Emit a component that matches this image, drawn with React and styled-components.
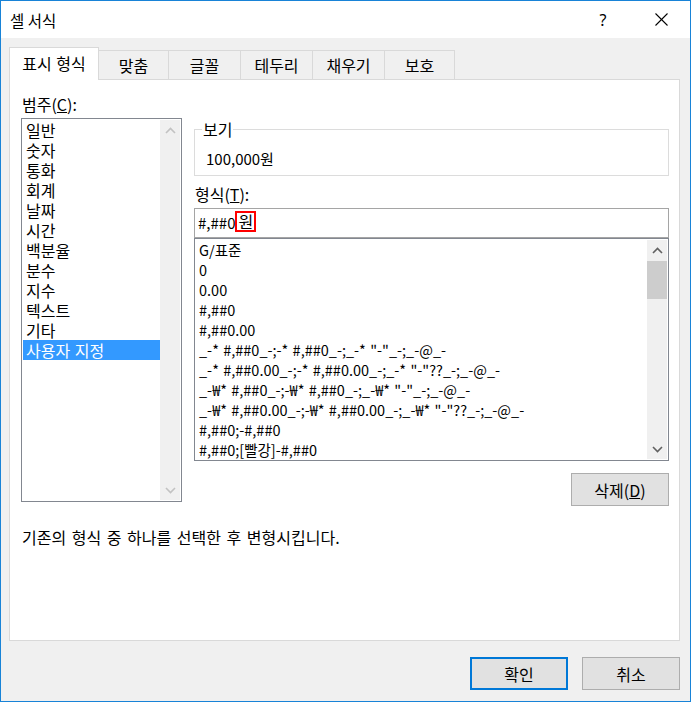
import React from "react";
import styled, { createGlobalStyle } from "styled-components";

const Global = createGlobalStyle`
  html, body { margin: 0; padding: 0; background: #ffffff; }
  body { font-family: "Noto Sans CJK KR", "Noto Sans", sans-serif; font-size: 16px; color: #000; }
  * { box-sizing: border-box; }
`;

const FONT = `"Noto Sans CJK KR", "Noto Sans", sans-serif`;

const Window = styled.div`
  width: 691px;
  height: 702px;
  border: 1px solid #1883d7;
  background: #f0f0f0;
  display: flex;
  flex-direction: column;
  font-family: ${FONT};
  font-size: 16px;
`;

const TitleBar = styled.div`
  height: 37px;
  background: #ffffff;
  display: flex;
  align-items: center;
  justify-content: space-between;
  padding-left: 9px;
  flex-shrink: 0;
`;

const Title = styled.div`
  font-size: 15.5px;
  line-height: 20px;
`;

const Controls = styled.div`
  display: flex;
  height: 100%;
`;

const CtrlBtn = styled.div`
  width: 58px;
  height: 100%;
  display: flex;
  align-items: center;
  justify-content: center;
  font-family: "Noto Sans", sans-serif;
  font-size: 16px;
  color: #000;
`;

const Body = styled.div`
  flex: 1;
  display: flex;
  flex-direction: column;
  padding: 10px 10px 0 8px;
  min-height: 0;
`;

const TabStrip = styled.div`
  display: flex;
  align-items: flex-end;
  height: 32px;
  margin-bottom: -1px;
  position: relative;
  z-index: 1;
`;

const Tab = styled.div`
  width: ${(p) => p.$w}px;
  height: ${(p) => (p.$active ? 33 : 30)}px;
  background: ${(p) => (p.$active ? "#ffffff" : "#f0f0f0")};
  border: 1px solid #d9d9d9;
  border-bottom: ${(p) => (p.$active ? "none" : "1px solid #d9d9d9")};
  margin-left: ${(p) => (p.$first ? 0 : -1)}px;
  display: flex;
  align-items: center;
  justify-content: center;
  padding-bottom: ${(p) => (p.$active ? 2 : 0)}px;
  line-height: 20px;
  word-spacing: 1px;
  position: relative;
  z-index: ${(p) => (p.$active ? 2 : 1)};
`;

const Panel = styled.div`
  flex: 1;
  background: #ffffff;
  border: 1px solid #d9d9d9;
  padding: 14px 10px 0 11px;
  display: flex;
  flex-direction: column;
`;

const Columns = styled.div`
  display: flex;
  gap: 12px;
  align-items: flex-start;
`;

const LeftCol = styled.div`
  width: 161px;
  display: flex;
  flex-direction: column;
`;

const RightCol = styled.div`
  width: 475px;
  display: flex;
  flex-direction: column;
  margin-top: 25px;
`;

const Label = styled.div`
  line-height: 20px;
  padding-left: 1px;
  margin-bottom: ${(p) => p.$mb || 0}px;
  margin-top: ${(p) => p.$mt || 0}px;
`;

const ListBox = styled.div`
  height: ${(p) => p.$h}px;
  border: 1px solid #828790;
  padding: 1px;
  display: flex;
  background: #ffffff;
`;

const Items = styled.div`
  flex: 1;
  display: flex;
  flex-direction: column;
  font-size: ${(p) => p.$fs || 16}px;
`;

const Item = styled.div`
  height: 20px;
  line-height: 20px;
  padding-left: 3px;
  white-space: pre;
  word-spacing: 1px;
  background: ${(p) => (p.$selected ? "#3399ff" : "transparent")};
  color: ${(p) => (p.$selected ? "#ffffff" : "#000000")};
`;

const ScrollBar = styled.div`
  width: 20px;
  background: #f0f0f0;
  display: flex;
  flex-direction: column;
`;

const ArrowBtn = styled.div`
  height: 20px;
  display: flex;
  align-items: center;
  justify-content: center;
  flex-shrink: 0;
`;

const Thumb = styled.div`
  height: 38px;
  margin-top: 1px;
  background: #cdcdcd;
`;

const Track = styled.div`
  flex: 1;
`;

const Group = styled.fieldset`
  margin: 0;
  padding: 0 0 6px 0;
  border: 1px solid #dcdcdc;
  min-width: 0;
`;

const Legend = styled.legend`
  margin-left: 7px;
  padding: 0 1px;
  line-height: 20px;
`;

const Preview = styled.div`
  line-height: 20px;
  font-size: 15px;
  padding-left: 11px;
  margin-top: 10px;
`;

const Input = styled.div`
  height: 30px;
  border: 1px solid #a5a5a5;
  padding-left: 3px;
  display: flex;
  align-items: center;
  white-space: pre;
  line-height: 20px;
  font-size: 15px;
`;

const Highlight = styled.span`
  display: inline-block;
  border: 2.5px solid #ff0000;
  line-height: 17px;
  padding: 0 1px;
  margin-bottom: 4px;
  font-size: 16px;
`;

const ButtonRow = styled.div`
  display: flex;
  justify-content: flex-end;
  margin-top: 12px;
`;

const Button = styled.div`
  width: 98px;
  height: 33px;
  background: #e1e1e1;
  border: ${(p) => (p.$primary ? "2px solid #0078d7" : "1px solid #adadad")};
  display: flex;
  align-items: center;
  justify-content: center;
  line-height: 20px;
`;

const Desc = styled.div`
  margin-top: 21px;
  line-height: 20px;
  padding-left: 1px;
  word-spacing: 2px;
`;

const Footer = styled.div`
  display: flex;
  justify-content: flex-end;
  gap: 14px;
  padding: 16px 0 11px;
`;

const Chevron = ({ up, color }) => (
  <svg width="11" height="7" viewBox="0 0 11 7">
    <polyline
      points={up ? "1,6 5.5,1.5 10,6" : "1,1 5.5,5.5 10,1"}
      fill="none"
      stroke={color}
      strokeWidth="1.6"
    />
  </svg>
);

const CloseIcon = () => (
  <svg width="13" height="13" viewBox="0 0 13 13">
    <line x1="0.5" y1="0.5" x2="12.5" y2="12.5" stroke="#000" strokeWidth="1.1" />
    <line x1="12.5" y1="0.5" x2="0.5" y2="12.5" stroke="#000" strokeWidth="1.1" />
  </svg>
);

const tabs = [
  { label: "표시 형식", w: 90 },
  { label: "맞춤", w: 71 },
  { label: "글꼴", w: 73 },
  { label: "테두리", w: 73 },
  { label: "채우기", w: 73 },
  { label: "보호", w: 71 },
];

const categories = [
  "일반", "숫자", "통화", "회계", "날짜", "시간",
  "백분율", "분수", "지수", "텍스트", "기타", "사용자 지정",
];

const formats = [
  "G/표준",
  "0",
  "0.00",
  "#,##0",
  "#,##0.00",
  '_-* #,##0_-;-* #,##0_-;_-* "-"_-;_-@_-',
  '_-* #,##0.00_-;-* #,##0.00_-;_-* "-"??_-;_-@_-',
  '_-₩* #,##0_-;-₩* #,##0_-;_-₩* "-"_-;_-@_-',
  '_-₩* #,##0.00_-;-₩* #,##0.00_-;_-₩* "-"??_-;_-@_-',
  "#,##0;-#,##0",
  "#,##0;[빨강]-#,##0",
];

export default function App() {
  return (
    <>
      <Global />
      <Window>
        <TitleBar>
          <Title>셀 서식</Title>
          <Controls>
            <CtrlBtn>?</CtrlBtn>
            <CtrlBtn>
              <CloseIcon />
            </CtrlBtn>
          </Controls>
        </TitleBar>
        <Body>
          <TabStrip>
            {tabs.map((t, i) => (
              <Tab key={t.label} $w={t.w} $active={i === 0} $first={i === 0}>
                {t.label}
              </Tab>
            ))}
          </TabStrip>
          <Panel>
            <Columns>
              <LeftCol>
                <Label $mb={4}>
                  범주(<u>C</u>):
                </Label>
                <ListBox $h={384}>
                  <Items>
                    {categories.map((c) => (
                      <Item key={c} $selected={c === "사용자 지정"}>
                        {c}
                      </Item>
                    ))}
                  </Items>
                  <ScrollBar>
                    <ArrowBtn>
                      <Chevron up color="#c2c2c2" />
                    </ArrowBtn>
                    <Track />
                    <ArrowBtn>
                      <Chevron color="#c2c2c2" />
                    </ArrowBtn>
                  </ScrollBar>
                </ListBox>
              </LeftCol>
              <RightCol>
                <Group>
                  <Legend>보기</Legend>
                  <Preview>100,000원</Preview>
                </Group>
                <Label $mt={8} $mb={4}>
                  형식(<u>T</u>):
                </Label>
                <Input>
                  #,##0<Highlight>원</Highlight>
                </Input>
                <ListBox $h={223}>
                  <Items $fs={14.5}>
                    {formats.map((f) => (
                      <Item key={f}>{f}</Item>
                    ))}
                  </Items>
                  <ScrollBar>
                    <ArrowBtn>
                      <Chevron up color="#606060" />
                    </ArrowBtn>
                    <Thumb />
                    <Track />
                    <ArrowBtn>
                      <Chevron color="#606060" />
                    </ArrowBtn>
                  </ScrollBar>
                </ListBox>
                <ButtonRow>
                  <Button>
                    삭제(<u>D</u>)
                  </Button>
                </ButtonRow>
              </RightCol>
            </Columns>
            <Desc>기존의 형식 중 하나를 선택한 후 변형시킵니다.</Desc>
          </Panel>
          <Footer>
            <Button $primary>확인</Button>
            <Button>취소</Button>
          </Footer>
        </Body>
      </Window>
    </>
  );
}
